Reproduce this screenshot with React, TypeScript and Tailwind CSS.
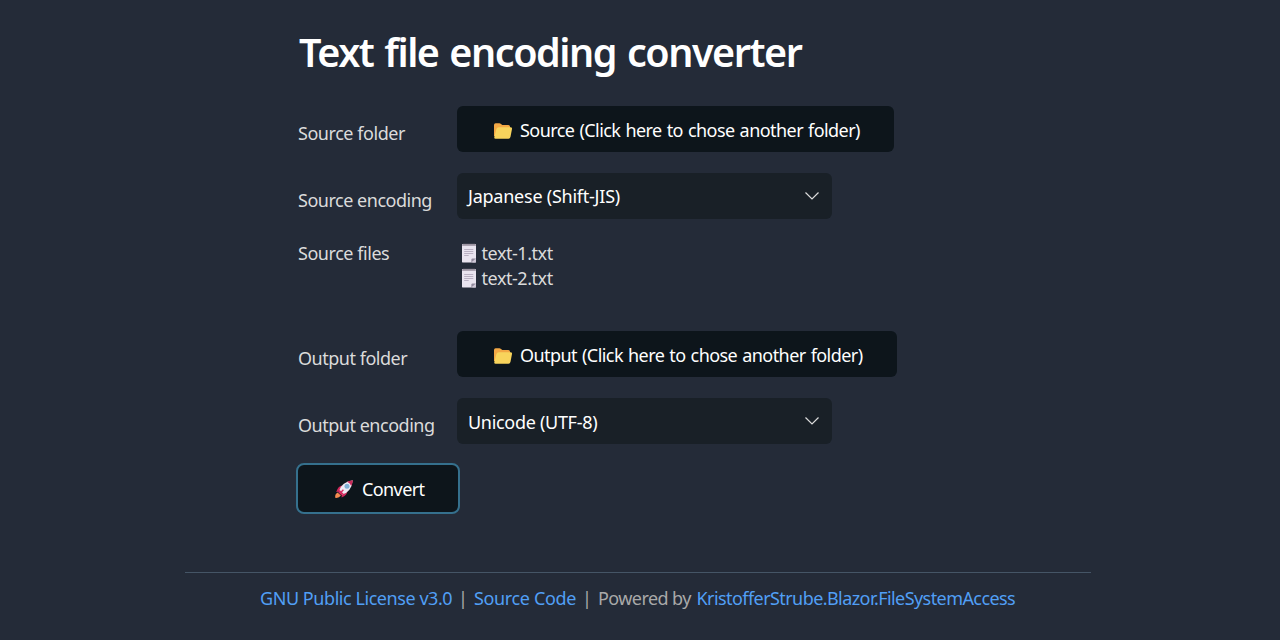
import type { ReactNode } from "react";

function FolderIcon() {
  return (
    <svg viewBox="0 0 20 18" className="h-[18px] w-5 shrink-0">
      <path d="M1 3Q1 1.2 2.6 1.2H6.4Q7.3 1.2 8 1.9L9.3 3H15.4Q17 3 17 4.6V14H1Z" fill="#f3a845" />
      <path d="M5.8 5.2H17.4Q19.3 5.2 19 7L17.5 14.8Q17.2 16.7 15.4 16.7H2.5Q1 16.7 1.3 15L3.4 7Q3.9 5.2 5.8 5.2Z" fill="#f8d45c" />
    </svg>
  );
}

function NotepadIcon() {
  return (
    <svg viewBox="0 0 16 20" className="h-5 w-4 shrink-0">
      <rect x="1" y="1" width="14" height="18.6" rx="1.2" fill="#e9e4ef" />
      <path d="M1 2.2Q1 1 2.2 1H13.8Q15 1 15 2.2V3H1Z" fill="#b5acba" />
      <path d="M3 .4V2.4M5 .4V2.4M7 .4V2.4M9 .4V2.4M11 .4V2.4M13 .4V2.4" stroke="#77717f" strokeWidth=".8" />
      <path d="M3.2 6.5H12.3M3.2 8.5H12.3M3.2 10.5H12.3M3.2 12.5H7.7" stroke="#b3a9bc" strokeWidth=".9" />
      <path d="M15 15.5V18.4Q15 19.6 13.8 19.6H11.2Z" fill="#cdc5d5" />
      <path d="M10.4 19.6V16.6Q10.4 15.4 11.6 15.4H15Z" fill="#918a9d" />
    </svg>
  );
}

function RocketIcon() {
  return (
    <svg viewBox="0 0 20 20" className="h-5 w-5 shrink-0">
      <path d="M1.2 18.8Q.8 15.2 3.6 13.6L6.9 16.6Q5 19.4 1.2 18.8Z" fill="#f58a50" />
      <path d="M8.6 6.4Q4 6.8 2.2 13L6.6 12.4ZM13.4 11.6Q13.4 16.6 7.6 18.6L7.8 13.8Z" fill="#d0275b" />
      <path d="M4.8 12.5Q7 3.2 18.8 1.2Q17.4 13 8 15.6Z" fill="#eee9f3" />
      <path d="M13 2.7Q16.1 1.5 19 1.2Q18.5 4.6 17.3 7.1Q16.2 4 13 2.7Z" fill="#c92a5a" />
      <path d="M4.2 13.2L5.5 10.8L9.6 14.7L7.1 16.1Z" fill="#d52b60" />
      <circle cx="13" cy="7.2" r="2.5" fill="#7fb0d6" />
      <path d="M6.8 13.4L9.4 10.8" stroke="#d52b60" strokeWidth="1.4" />
    </svg>
  );
}

function Row({ label, tracking, children }: { label: string; tracking: string; children: ReactNode }) {
  return (
    <div className="flex h-[67px] shrink-0 items-start">
      <div className={`w-40 shrink-0 pt-[14px] pl-px text-[#dbdbdb] ${tracking}`}>{label}</div>
      {children}
    </div>
  );
}

function FolderButton({ width, children }: { width: string; children: string }) {
  return (
    <button className={`flex h-[46px] items-center rounded-md bg-[#0d151b] pt-[3px] pl-9 text-white ${width}`}>
      <FolderIcon />
      <span className="-mt-px ml-[7px] tracking-[-0.56px] [word-spacing:0.9px]">{children}</span>
    </button>
  );
}

function EncodingSelect({ tracking, children }: { tracking: string; children: string }) {
  return (
    <button className="flex h-[46px] w-[375px] items-center justify-between rounded-md bg-[#192027] pt-px pr-3 pl-[11px] text-white">
      <span className={tracking}>{children}</span>
      <svg viewBox="0 0 16 10" className="-mt-0.5 h-2.5 w-4" fill="none" stroke="#dcdcdc" strokeWidth="1.2">
        <path d="M1.5 1.5L8 8L14.5 1.5" />
      </svg>
    </button>
  );
}

function FileItem({ children }: { children: string }) {
  return (
    <div className="flex h-[25.5px] items-center">
      <NotepadIcon />
      <span className="ml-[5px] tracking-[-0.45px]">{children}</span>
    </div>
  );
}

export default function App() {
  return (
    <main className="h-[640px] overflow-hidden bg-[#242b38] font-['Noto_Sans','Open_Sans',sans-serif] text-[18px] leading-[26px] whitespace-nowrap">
      <section className="ml-[297px] flex h-[572px] flex-col items-start">
        <h1 className="mt-[26px] mb-[28px] ml-0.5 text-[39.5px] leading-[52px] font-semibold tracking-[-1.45px] [word-spacing:2px] text-white">
          Text file encoding converter
        </h1>
        <div className="flex h-[134px] flex-col">
          <Row label="Source folder" tracking="tracking-[-0.45px]">
            <FolderButton width="w-[437px]">Source (Click here to chose another folder)</FolderButton>
          </Row>
          <Row label="Source encoding" tracking="tracking-[-0.48px]">
            <EncodingSelect tracking="-mt-px tracking-[-0.24px]">Japanese (Shift-JIS)</EncodingSelect>
          </Row>
        </div>
        <div className="flex h-[91px] text-[#dbdbdb]">
          <div className="w-[163.5px] pl-px tracking-[-0.45px]">Source files</div>
          <div className="flex flex-col">
            <FileItem>text-1.txt</FileItem>
            <FileItem>text-2.txt</FileItem>
          </div>
        </div>
        <div className="flex h-[132px] flex-col">
          <Row label="Output folder" tracking="tracking-[-0.48px]">
            <FolderButton width="w-[440px]">Output (Click here to chose another folder)</FolderButton>
          </Row>
          <Row label="Output encoding" tracking="tracking-[-0.48px]">
            <EncodingSelect tracking="tracking-[-0.3px]">Unicode (UTF-8)</EncodingSelect>
          </Row>
        </div>
        <button className="-ml-px flex h-[51px] w-[164px] items-center rounded-lg border-2 border-[#35708d] bg-[#0d151b] pl-[36px] text-white">
          <RocketIcon />
          <span className="ml-2 tracking-[-0.6px]">Convert</span>
        </button>
      </section>
      <footer className="mr-[189px] ml-[185px] flex border-t border-[#455566] pt-3 pl-[75px] text-[#a9a9a9]">
        <a className="w-[198px] tracking-[-0.44px] text-[#519ff5]">GNU Public License v3.0</a>
        <span className="w-4">|</span>
        <a className="w-[108px] tracking-[-0.35px] text-[#519ff5]">Source Code</a>
        <span className="w-4">|</span>
        <span className="w-[98.5px] tracking-[-0.58px]">Powered by</span>
        <a className="tracking-[-0.57px] text-[#519ff5]">KristofferStrube.Blazor.FileSystemAccess</a>
      </footer>
    </main>
  );
}
